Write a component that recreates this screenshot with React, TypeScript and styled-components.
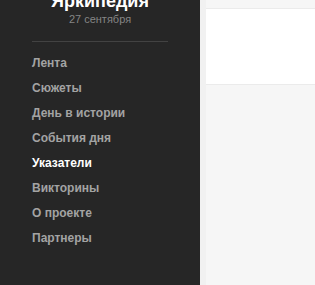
import React from 'react'
import styled, { createGlobalStyle } from 'styled-components'

const GlobalStyle = createGlobalStyle`
    html, body {
        margin: 0;
        padding: 0;
        background: #f6f6f6;
        overflow: hidden;
    }
    body {
        font-family: "Liberation Sans", Arial, sans-serif;
    }
`

const menu = ['Лента', 'Сюжеты', 'День в истории', 'События дня', 'Указатели', 'Викторины', 'О проекте', 'Партнеры']

const App: React.FC = () => {
    return (
        <Page>
            <GlobalStyle />
            <Sidebar>
                <Brand>
                    <Title>Яркипедия</Title>
                    <DateLabel>27 сентября</DateLabel>
                </Brand>
                <Divider />
                <Menu>
                    {menu.map(item => (
                        <MenuItem key={item} active={item === 'Указатели'}>{item}</MenuItem>
                    ))}
                </Menu>
            </Sidebar>
            <Content>
                <TopBand />
                <Card />
            </Content>
        </Page>
    )
}

export default App

const Page = styled.div`
    display: flex;
    width: 315px;
    height: 285px;
`

const Sidebar = styled.aside`
    width: 200px;
    flex-shrink: 0;
    background: #262626;
    display: flex;
    flex-direction: column;
    align-items: center;
`

const Brand = styled.div`
    display: flex;
    flex-direction: column;
    align-items: center;
    margin-top: -9px;
`

const Title = styled.div`
    color: #fff;
    font-size: 18px;
    line-height: 20px;
    font-weight: bold;
`

const DateLabel = styled.div`
    color: #858585;
    font-size: 11px;
    line-height: 13px;
    margin-top: 2px;
`

const Divider = styled.div`
    width: 136px;
    height: 1px;
    background: #424242;
    margin-top: 15px;
`

const Menu = styled.nav`
    align-self: stretch;
    display: flex;
    flex-direction: column;
    padding: 9px 0 0 32px;
`

const MenuItem = styled.a<{ active?: boolean }>`
    color: ${p => p.active ? '#fff' : '#a3a3a3'};
    font-size: 12px;
    font-weight: bold;
    line-height: 25px;
`

const Content = styled.main`
    flex: 1;
    display: flex;
    flex-direction: column;
    background: #f6f6f6;
    border-left: 6px solid #f1f1f1;
`

const TopBand = styled.div`
    height: 8px;
    border-bottom: 1px solid #ebebeb;
`

const Card = styled.div`
    height: 75px;
    background: #fff;
    border-bottom: 1px solid #ebebeb;
`
